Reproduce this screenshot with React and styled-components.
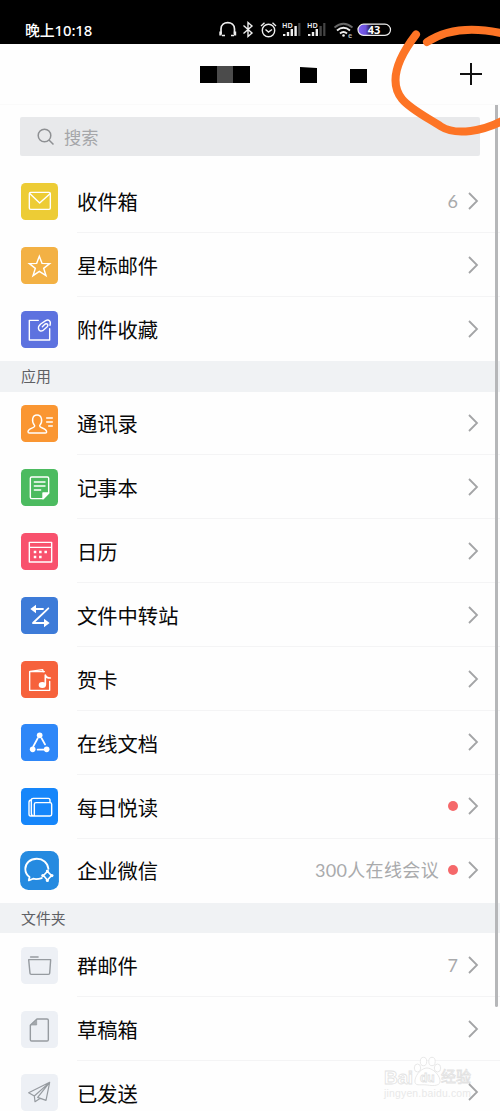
import React from 'react';
import styled, { createGlobalStyle } from 'styled-components';

const GlobalStyle = createGlobalStyle`
  * {
    box-sizing: border-box;
  }
  body {
    margin: 0;
    background: #fefefe;
    overflow: hidden;
    font-family: "Noto Sans CJK SC", sans-serif;
  }
`;

const Screen = styled.div`
  position: relative;
  width: 500px;
  height: 1111px;
  overflow: hidden;
  background: #fefefe;
`;

const StatusBar = styled.div`
  display: flex;
  justify-content: space-between;
  height: 44px;
  padding-left: 25px;
  background: #000;
  color: #fff;
`;

const Clock = styled.span`
  padding-top: 19px;
  font-family: "Noto Sans", "Noto Sans CJK SC", sans-serif;
  font-size: 14.9px;
  font-weight: 500;
  line-height: 22px;
  letter-spacing: -0.1px;
`;

const StatusIcons = styled.svg`
  width: 290px;
  height: 44px;
  flex: none;
`;

const Header = styled.header`
  display: flex;
  justify-content: space-between;
  align-items: center;
  height: 61px;
  padding: 0 18px 0 200px;
  border-bottom: 1px solid #fafafa;
`;

const Search = styled.div`
  display: flex;
  align-items: center;
  gap: 9px;
  height: 39px;
  margin: 12px 20px 13.4px;
  padding-left: 17px;
  border-radius: 2px;
  background: #e8e9eb;
  color: #a5a6a9;
  font-size: 17.3px;
  line-height: 39px;
`;

const Section = styled.h2`
  height: 30.5px;
  margin: 0;
  padding-left: 21px;
  background: #f0f2f4;
  color: #5e6064;
  font-size: 14.9px;
  font-weight: 400;
  line-height: 30px;
`;

const Row = styled.div`
  display: flex;
  align-items: center;
  height: 63.9px;
  padding: 0 21px;
`;

const Tile = styled.div`
  display: flex;
  flex: none;
  width: 37px;
  height: 37px;
  border-radius: ${(p) => (p.$round ? '8px' : '4.5px')};
  background: ${(p) => p.$color};
  transform: ${(p) => (p.$round ? 'scale(1.05)' : 'none')};

  svg {
    width: 37px;
    height: 37px;
    fill: none;
    stroke: ${(p) => p.$ink || '#fff'};
    stroke-width: 4.2;
    stroke-linejoin: round;
    stroke-linecap: round;
  }
`;

const RowBody = styled.div`
  display: flex;
  flex: 1;
  align-items: center;
  height: 100%;
  margin: 0 -21px 0 19px;
  padding-right: 21px;
  border-bottom: 1px solid ${(p) => (p.$last ? 'transparent' : '#f4f4f5')};
`;

const Label = styled.span`
  flex: 1;
  padding-top: 0.4px;
  color: #080808;
  font-size: 20.3px;
  line-height: 30px;
`;

const Note = styled.span`
  margin-right: 9px;
  padding-top: 0.4px;
  color: #a9aaac;
  font-family: Lato, "Noto Sans CJK SC", sans-serif;
  font-size: 18px;
  letter-spacing: ${(p) => (p.$long ? '0.35px' : '0')};
  line-height: 28px;
`;

const Dot = styled.i`
  width: 10px;
  height: 10px;
  margin-right: 9px;
  border-radius: 50%;
  background: #f5686a;
`;

const Arrow = styled.svg`
  position: relative;
  z-index: 1;
  width: 12px;
  height: 18px;
  fill: none;
  stroke: #a3a4a6;
  stroke-width: 1.8;
`;

const ScrollThumb = styled.div`
  position: absolute;
  top: 105px;
  right: 2px;
  width: 3px;
  height: 902px;
  border-radius: 0 0 2px 2px;
  background: #b6b7b9;
`;

const Scribble = styled.svg`
  position: absolute;
  top: 0;
  right: 0;
  width: 130px;
  height: 150px;
`;

const Watermark = styled.svg`
  position: absolute;
  right: 20px;
  bottom: 0;
  width: 110px;
  height: 60px;
`;

// every drawing uses a 111 unit box
const icons = {
  inbox: (
    <>
      <rect x="25" y="28" width="63" height="51" rx="4" />
      <path d="M27 32 56 60 87 32" />
    </>
  ),
  star: <path d="M55 28 63 49 86 50 68 64 75 86 55 73 36 86 43 64 25 50 47 49Z" strokeLinejoin="miter" />,
  attachment: (
    <>
      <path d="M52 28H25V87H86V53" />
      <path d="M87 43C91 30 83 24 74 29L59 39C47 49 53 64 65 59L77 49C85 42 78 34 70 41L64 47" />
    </>
  ),
  contacts: (
    <>
      <path d="M41 62C30 48 34 30 48 30S67 48 56 62C55 70 76 68 77 81Q77 84 73 84H25Q21 84 21 80C23 68 42 71 41 62Z" />
      <path d="M77 39H94M77 51H94M83 63H94" />
    </>
  ),
  notes: (
    <>
      <path d="M66 89H32Q28 89 28 85V28Q28 24 32 24H79Q83 24 83 28V72Z" />
      <path d="M66 89V72H83Z" fill="#fff" />
      <path d="M40 39H72M40 51H72M40 63H59" />
    </>
  ),
  calendar: (
    <>
      <path d="M25 28H92V87H25ZM25 43H92" />
      <path d="M42 57h.1M58 57h.1M74 57h.1M42 72h.1M58 72h.1" strokeWidth="7.5" strokeLinecap="square" />
    </>
  ),
  transfer: (
    <>
      <path d="M40 36H66M82 34 36 78H74" strokeWidth="5.5" />
      <path d="M45 23 28 36 45 49ZM69 65 86 78 69 91Z" fill="#fff" stroke="none" />
    </>
  ),
  card: (
    <>
      <path d="M70 32H26V88H86V61" />
      <path d="M27 31 65 26 67 32" />
      <path d="M73 71V42Q75 51 88 51" strokeWidth="5" />
      <ellipse cx="64" cy="72" rx="11" ry="9" fill="#fff" stroke="none" />
    </>
  ),
  docs: (
    <>
      <path d="M50 43 37 67M62 43 72 61M50 77H68" strokeWidth="5.5" />
      <g fill="#fff" stroke="none">
        <circle cx="56" cy="34" r="8.5" />
        <circle cx="35" cy="76" r="8.5" />
        <circle cx="77" cy="76" r="8.5" />
      </g>
    </>
  ),
  reading: (
    <>
      <path d="M36 84H29Q24 84 24 78V43Q24 36 31 36V76Q31 84 38 84H87Q92 84 92 79V49Q92 44 87 44H45Q40 44 40 49V83" />
      <path d="M31 36Q31 31 37 31H82Q87 31 87 37V43" />
    </>
  ),
  wework: (
    <>
      <path d="M81 51C79 33 65 22 48 22 28 22 15 35 15 51 15 61 20 69 27 74L25 84 37 79Q48 82 62 77" strokeWidth="5.2" />
      <path d="M78 58 67 70 78 83 90 70Z" strokeWidth="4.5" />
      <g fill="#fff" stroke="none">
        <circle cx="78" cy="57" r="4.5" />
        <circle cx="91" cy="70" r="4.5" />
        <circle cx="78" cy="84" r="4.5" />
        <circle cx="65" cy="70" r="4.5" />
      </g>
    </>
  ),
  folder: (
    <>
      <path d="M23 38H89L86 79Q86 82 82 82H31Q27 82 27 79Z" />
      <path d="M29 30H51" strokeWidth="5" />
    </>
  ),
  draft: (
    <>
      <path d="M48 24H78Q82 24 82 28V86Q82 90 78 90H32Q28 90 28 86V43Z" />
      <path d="M47 26V42H30Z" fill="#a3a7ac" strokeWidth="2" />
    </>
  ),
  sent: (
    <path d="M86 25 23 56 40 66 86 25 75 79 50 70 86 25M40 66 42 83 58 73" strokeWidth="3.6" />
  ),
};

const mailRows = [
  { icon: 'inbox', color: '#edcc35', label: '收件箱', note: '6' },
  { icon: 'star', color: '#f3b144', label: '星标邮件' },
  { icon: 'attachment', color: '#5d72df', label: '附件收藏' },
];

const appRows = [
  { icon: 'contacts', color: '#fa9632', label: '通讯录' },
  { icon: 'notes', color: '#4cbb60', label: '记事本' },
  { icon: 'calendar', color: '#f8516d', label: '日历' },
  { icon: 'transfer', color: '#3d7bd8', label: '文件中转站' },
  { icon: 'card', color: '#f6623c', label: '贺卡' },
  { icon: 'docs', color: '#2e87f8', label: '在线文档' },
  { icon: 'reading', color: '#1686fa', label: '每日悦读', dot: true },
  { icon: 'wework', color: '#258ae0', label: '企业微信', note: '300人在线会议', dot: true, round: true },
];

const folderRows = [
  { icon: 'folder', label: '群邮件', note: '7' },
  { icon: 'draft', label: '草稿箱' },
  { icon: 'sent', label: '已发送' },
];

const List = ({ rows }) =>
  rows.map((row, i) => (
    <Row key={row.label}>
      <Tile $color={row.color || '#edf0f5'} $ink={row.color ? '#fff' : '#969ba0'} $round={row.round}>
        <svg viewBox="0 0 111 111">{icons[row.icon]}</svg>
      </Tile>
      <RowBody $last={i === rows.length - 1}>
        <Label>{row.label}</Label>
        {row.note && <Note $long={row.note.length > 1}>{row.note}</Note>}
        {row.dot && <Dot />}
        <Arrow viewBox="0 0 12 18">
          <path d="M2 1 10 9 2 17" />
        </Arrow>
      </RowBody>
    </Row>
  ));

const Status = () => (
  <StatusIcons viewBox="210 0 290 44" fill="none" stroke="#eee" strokeWidth="1.4">
    <defs>
      <linearGradient id="charge">
        <stop offset="0" stopColor="#8061f4" />
        <stop offset="0.24" stopColor="#6950dc" />
        <stop offset="0.45" stopColor="#000" />
      </linearGradient>
    </defs>
    <path d="M221 34V29C221 20.5 234.5 20.5 234.5 29V34" strokeWidth="1.7" />
    <path d="M220.5 31.5V35.5M235 31.5V35.5" strokeWidth="2.4" />
    <path d="M222 35.5H225M231 35.5H234" />
    <path d="M243.5 25.5 252 33 248 36.5V22.5L252 26 243.5 33.5" />
    <circle cx="268.5" cy="30.5" r="6.2" />
    <path d="M265.5 29.5 268.5 32 272 29.5M261 26 264.5 22.8M272.5 22.8 276 26" />
    {[283, 308].map((x) => (
      <g key={x} stroke="none" fill="#eee">
        <text x={x - 1} y="27.5" fontSize="7.2" fontWeight="600" fontFamily="Noto Sans">HD</text>
        <rect x={x} y="34" width="2.4" height="2" />
        <rect x={x + 3.8} y="32" width="2.4" height="4" />
        <rect x={x + 7.6} y="29" width="2.4" height="7" />
        <rect x={x + 11.4} y="26" width="2.4" height="10" fill={x === 283 ? '#eee' : '#444'} />
        <rect x={x + 15.2} y="23" width="2.2" height="13" fill="#444" />
      </g>
    ))}
    <path d="M334.5 27.5Q343.5 20 352.5 27.5" stroke="#666" strokeWidth="1.8" />
    <path d="M337 30.5Q343.5 25 350 30.5M340 33.5Q343.5 30.5 347 33.5" strokeWidth="1.9" />
    <circle cx="343.5" cy="35.5" r="1.3" fill="#eee" stroke="none" />
    <text x="348" y="37.5" fontSize="7" fontWeight="700" fontFamily="Noto Sans" fill="#aaa" stroke="none">e</text>
    <rect x="358" y="24.2" width="32.5" height="11.2" rx="5.6" fill="url(#charge)" strokeWidth="1.2" />
    <text x="374" y="33.9" textAnchor="middle" fontSize="11" fontWeight="700" fontFamily="Noto Sans" fill="#fff" stroke="none">43</text>
  </StatusIcons>
);

const App = () => {
  return (
    <Screen>
      <GlobalStyle />
      <StatusBar>
        <Clock>晚上10:18</Clock>
        <Status />
      </StatusBar>
      <Header>
        <svg width="168" height="17" viewBox="0 0 168 17">
          <path d="M0 0H50V17H0ZM100 1 117 2V17H100ZM150 3H167V17H150Z" />
          <path d="M17 0H33V17H17Z" fill="#4b4b4b" />
        </svg>
        <svg width="22" height="22" viewBox="0 0 22 22" stroke="#111" strokeWidth="2">
          <path d="M11 0V22M0 11H22" />
        </svg>
      </Header>
      <Search>
        <svg width="18" height="18" viewBox="0 0 18 18" fill="none" stroke="#8e9093" strokeWidth="1.5">
          <circle cx="7.5" cy="7.5" r="6.3" />
          <path d="M12 12 16.5 16.5" />
        </svg>
        搜索
      </Search>
      <List rows={mailRows} />
      <Section>应用</Section>
      <List rows={appRows} />
      <Section>文件夹</Section>
      <List rows={folderRows} />
      <ScrollThumb />
      <Scribble viewBox="370 0 130 150" fill="none" stroke="#fd7425" strokeWidth="8" strokeLinecap="round">
        <path d="M416 34.5C401 54 387 80 402 99C410 109 428 118 441 126.5C456 136 484 131 504 120" />
        <path d="M427 42C449 27.5 478 27.5 505 34" />
      </Scribble>
      <Watermark viewBox="370 1051 110 60" fill="#fff" stroke="#e2e2e2" strokeWidth="0.8">
        <g fontFamily="Liberation Sans" fontWeight="700" fontSize="19">
          <text x="384" y="1084" textLength="29">Bai</text>
          <path d="M415 1080C416 1074 422 1068 427 1068S439 1074 440 1080 434 1086 427 1085 414 1087 415 1080Z" />
          <ellipse cx="417.5" cy="1068" rx="3.2" ry="4" />
          <ellipse cx="423.5" cy="1061.5" rx="3.2" ry="4.2" />
          <ellipse cx="432" cy="1061.5" rx="3.2" ry="4.2" />
          <ellipse cx="437.5" cy="1068" rx="3.2" ry="4" />
          <text x="420" y="1082" fontSize="12">du</text>
          <text x="441" y="1082" fontSize="15" fontWeight="400" fontFamily="Noto Sans CJK SC">经验</text>
        </g>
        <text x="384" y="1097" fontSize="10.4" textLength="87" fontFamily="Liberation Sans" fill="#e9e9e9" stroke="none">jingyen.baidu.com</text>
      </Watermark>
    </Screen>
  );
};

export default App;
